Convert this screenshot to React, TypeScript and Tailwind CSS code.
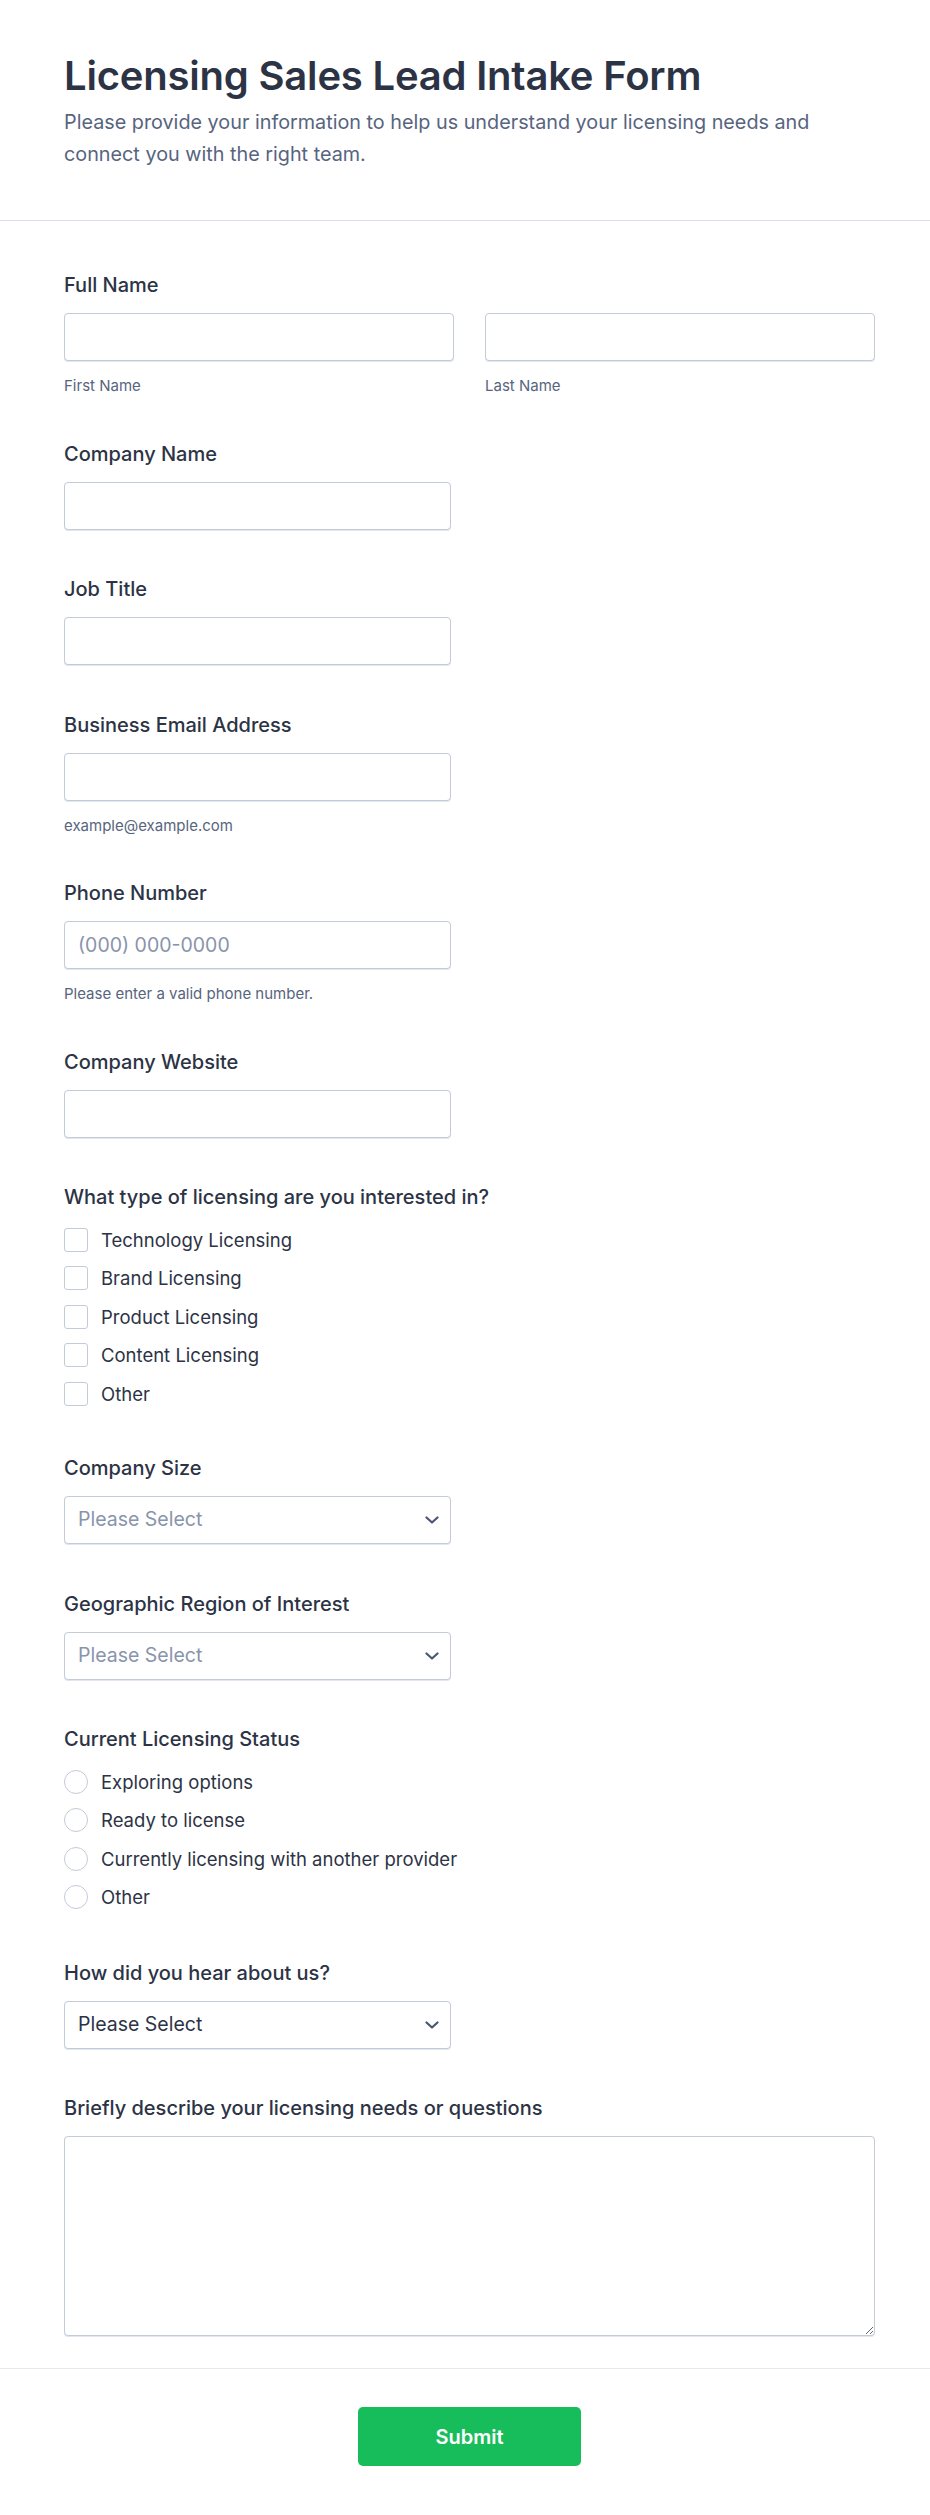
import React from "react";

const labelCls = "block text-[20px] leading-[24px] font-medium text-[#2c3345]";
const inputCls =
  "block h-[48px] w-full rounded-[4px] border border-[#c3cad8] bg-white px-[13px] text-[19.5px] text-[#2c3345] placeholder:text-[#8894ab] outline-none shadow-[0_1px_0_#e3e6ee]";
const subCls = "mt-[16px] block text-[15px] leading-[17px] text-[#57647e]";

function Chevron() {
  return (
    <svg
      className="pointer-events-none absolute right-[12px] top-1/2 -translate-y-1/2"
      width="14"
      height="8"
      viewBox="0 0 14 8"
      fill="none"
    >
      <path d="M1.5 1.5L7 6.5L12.5 1.5" stroke="#4a5573" strokeWidth="2.2" strokeLinecap="round" strokeLinejoin="round" />
    </svg>
  );
}

function SelectBox({ placeholderGray }: { placeholderGray: boolean }) {
  return (
    <div className="relative w-[387px]">
      <select
        defaultValue=""
        className={
          "block h-[48px] w-full appearance-none rounded-[4px] border border-[#c3cad8] bg-white pl-[13px] pr-[36px] text-[19.5px] outline-none shadow-[0_1px_0_#e3e6ee] " +
          (placeholderGray ? "text-[#8894ab]" : "text-[#2c3345]")
        }
      >
        <option value="">Please Select</option>
      </select>
      <Chevron />
    </div>
  );
}

function Field({ label, children }: { label: string; children: React.ReactNode }) {
  return (
    <div>
      <label className={labelCls + " mb-[16px]"}>{label}</label>
      {children}
    </div>
  );
}

export default function App() {
  const checks = ["Technology Licensing", "Brand Licensing", "Product Licensing", "Content Licensing", "Other"];
  const radios = ["Exploring options", "Ready to license", "Currently licensing with another provider", "Other"];
  return (
    <div className="min-h-[2515px] bg-white" style={{ fontFamily: "Inter, 'Noto Sans', sans-serif" }}>
      <header className="border-b border-[#dcdee7] pl-[64px] pr-[55px] pt-[52px] pb-[50px]">
        <h1 className="text-[40px] leading-[48px] font-semibold text-[#2c3345] tracking-[-0.2px]">
          Licensing Sales Lead Intake Form
        </h1>
        <p className="mt-[6px] text-[19.8px] leading-[32px] text-[#57647e]">
          Please provide your information to help us understand your licensing needs and connect you with the right team.
        </p>
      </header>

      <main className="pl-[64px] pr-[55px] pt-[52px] pb-[32px]">
        <div className="flex flex-col gap-[47.5px]">
          <div>
            <label className={labelCls + " mb-[16px]"}>Full Name</label>
            <div className="grid grid-cols-2 gap-[31px]">
              <div>
                <input className={inputCls} />
                <span className={subCls}>First Name</span>
              </div>
              <div>
                <input className={inputCls} />
                <span className={subCls}>Last Name</span>
              </div>
            </div>
          </div>

          <Field label="Company Name">
            <input className={inputCls + " !w-[387px]"} />
          </Field>

          <Field label="Job Title">
            <input className={inputCls + " !w-[387px]"} />
          </Field>

          <div>
            <label className={labelCls + " mb-[16px]"}>Business Email Address</label>
            <input className={inputCls + " !w-[387px]"} />
            <span className={subCls}>example@example.com</span>
          </div>

          <div>
            <label className={labelCls + " mb-[16px]"}>Phone Number</label>
            <input className={inputCls + " !w-[387px]"} placeholder="(000) 000-0000" />
            <span className={subCls}>Please enter a valid phone number.</span>
          </div>

          <Field label="Company Website">
            <input className={inputCls + " !w-[387px]"} />
          </Field>

          <div className="pb-[3px]">
            <label className={labelCls + " mb-[19px]"}>What type of licensing are you interested in?</label>
            <div className="flex flex-col gap-[14.4px]">
              {checks.map((c) => (
                <div key={c} className="flex items-center gap-[13px]">
                  <span className="block h-[24px] w-[24px] shrink-0 rounded-[3px] border border-[#c3cad8] bg-white" />
                  <span className="text-[18.5px] leading-[24px] text-[#2c3345]">{c}</span>
                </div>
              ))}
            </div>
          </div>

          <Field label="Company Size">
            <SelectBox placeholderGray />
          </Field>

          <Field label="Geographic Region of Interest">
            <SelectBox placeholderGray />
          </Field>

          <div className="pb-[4px]">
            <label className={labelCls + " mb-[19px]"}>Current Licensing Status</label>
            <div className="flex flex-col gap-[14.4px]">
              {radios.map((c) => (
                <div key={c} className="flex items-center gap-[13px]">
                  <span className="block h-[24px] w-[24px] shrink-0 rounded-full border border-[#c3cad8] bg-white" />
                  <span className="text-[18.5px] leading-[24px] text-[#2c3345]">{c}</span>
                </div>
              ))}
            </div>
          </div>

          <Field label="How did you hear about us?">
            <SelectBox placeholderGray={false} />
          </Field>

          <Field label="Briefly describe your licensing needs or questions">
            <textarea className="block h-[200px] w-full rounded-[4px] border border-[#c3cad8] bg-white px-[14px] py-[10px] text-[20px] text-[#2c3345] outline-none shadow-[0_1px_0_#e3e6ee]" />
          </Field>
        </div>
      </main>

      <footer className="border-t border-[#e6e8ee] pt-[38px] pb-[49px]">
        <div className="flex justify-center pl-[64px] pr-[55px]">
          <button className="h-[59px] w-[223px] rounded-[5px] bg-[#18bd5b] text-[20px] font-semibold text-white">
            Submit
          </button>
        </div>
      </footer>
    </div>
  );
}
